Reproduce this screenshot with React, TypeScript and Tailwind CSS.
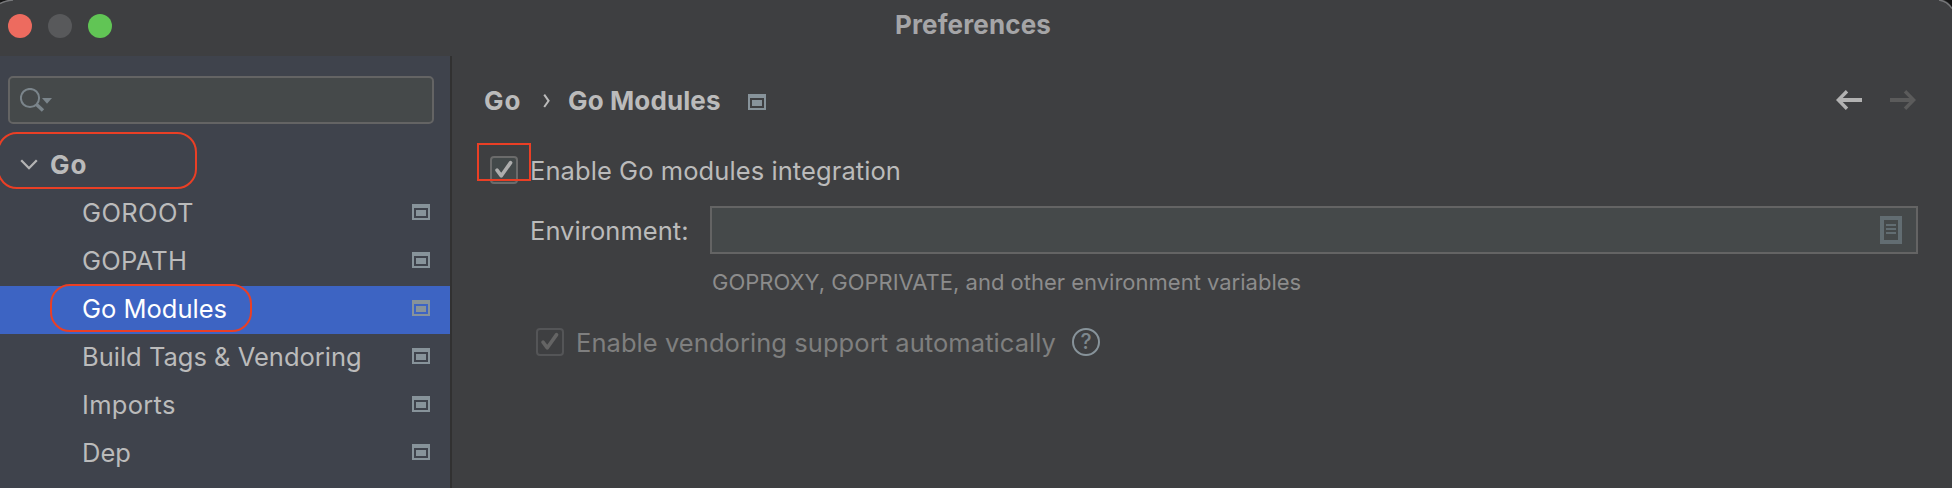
function ProjectIcon({ className = '' }: { className?: string }) {
  return (
    <svg className={`block shrink-0 ${className}`} width="18" height="16" viewBox="0 0 18 16" fill="#87939a" shapeRendering="crispEdges">
      <path fillRule="evenodd" d="M0 0H18V16H0ZM2 4V14H16V4Z" />
      <rect x="4" y="6" width="10" height="6" />
    </svg>
  );
}

function CheckBox({ disabled = false }: { disabled?: boolean }) {
  return (
    <span
      className={`block h-7 w-7 shrink-0 rounded-[4px] border-2 ${
        disabled ? 'border-[#545557] bg-[#3e3f41]' : 'border-[#6b6b6b] bg-[#43494a]'
      }`}
    >
      <svg className="-mt-0.5 -ml-0.5 block" width="28" height="28" viewBox="0 0 28 28" fill="none">
        <path d="M7 14.2L11.3 19.8L20.6 6.6" stroke={disabled ? '#646464' : '#adadad'} strokeWidth="3.6" strokeLinecap="round" strokeLinejoin="round" />
      </svg>
    </span>
  );
}

function Arrow({ color, flip = false }: { color: string; flip?: boolean }) {
  return (
    <svg className={flip ? 'block -scale-x-100' : 'block'} width="26" height="20" viewBox="0 0 26 20" fill="none" stroke={color}>
      <path d="M4 10H26" strokeWidth="4" />
      <path d="M11 1.2L2.3 10L11 18.8" strokeWidth="3.4" />
    </svg>
  );
}

function TreeRow({ label, selected = false, tracking = '' }: { label: string; selected?: boolean; tracking?: string }) {
  return (
    <div className={`flex h-12 items-start justify-between pr-5 pl-[82px] ${selected ? 'bg-[#3d64c3] text-white' : ''}`}>
      <span className={`leading-[46px] ${tracking}`}>{label}</span>
      <ProjectIcon className="mt-3.5" />
    </div>
  );
}

export default function App() {
  return (
    <div className="relative flex h-[488px] w-[1952px] flex-col overflow-hidden bg-[#3e3f41] font-['Inter','Liberation_Sans',sans-serif] text-[25.5px] whitespace-nowrap text-[#bbbbbb]">
      <header className="grid h-14 shrink-0 grid-cols-[1fr_auto_1fr] items-start">
        <div className="flex gap-4 pt-3.5 pl-2">
          <span className="h-6 w-6 rounded-full bg-[#ed6b5f]" />
          <span className="h-6 w-6 rounded-full bg-[#58595b]" />
          <span className="h-6 w-6 rounded-full bg-[#61c555]" />
        </div>
        <h1 className="pr-[6px] text-[26px] leading-[49px] font-bold tracking-[0.15px] text-[#a5a5a7]">Preferences</h1>
      </header>

      <div className="flex min-h-0 flex-1">
        <aside className="w-[452px] shrink-0 border-r-2 border-[#313131] bg-[#3f434c]">
          <div className="pt-5 pr-4 pb-[18px] pl-2">
            <div className="flex h-12 items-start rounded-[5px] border-2 border-[#646464] bg-[#45494a]">
              <svg className="mt-2.5 ml-2.5 block" width="34" height="26" viewBox="0 0 34 26" fill="none">
                <circle cx="10" cy="10" r="9.1" stroke="#7b858b" strokeWidth="2" />
                <path d="M16.5 16.5L23 22.6" stroke="#7b858b" strokeWidth="3.4" />
                <path d="M22 10H32L27 15.8Z" fill="#7b858b" />
              </svg>
            </div>
          </div>
          <div className="flex h-12 items-start pl-5">
            <svg className="mt-[17px] block" width="18" height="12" viewBox="0 0 18 12" fill="none">
              <path d="M1.2 1.2L9 9.2L16.8 1.2" stroke="#b4b4b4" strokeWidth="2.3" />
            </svg>
            <span className="pl-3 text-[26px] leading-[45px] font-bold tracking-[0.9px]">Go</span>
          </div>
          <TreeRow label="GOROOT" tracking="tracking-[0.37px]" />
          <TreeRow label="GOPATH" tracking="tracking-[0.24px]" />
          <TreeRow label="Go Modules" selected />
          <TreeRow label="Build Tags & Vendoring" />
          <TreeRow label="Imports" tracking="tracking-[0.3px]" />
          <TreeRow label="Dep" />
        </aside>

        <main className="flex flex-1 flex-col pr-[34px]">
          <div className="flex h-[86px] items-start pt-[21px] pr-0.5 pl-8">
            <nav className="flex items-start text-[26px] leading-[47px] font-bold tracking-[0.12px]">
              <span className="w-[59px] tracking-[0.9px]">Go</span>
              <svg className="mt-[17px] block" width="8" height="14" viewBox="0 0 8 14" fill="none">
                <path d="M1.2 0.6L5.6 6.8L1.2 13" stroke="#bbbbbb" strokeWidth="2" />
              </svg>
              <span className="w-[197px] pl-[17px]">Go Modules</span>
              <ProjectIcon className="mt-[17px]" />
            </nav>
            <div className="ml-auto flex gap-7 pt-[13px]">
              <Arrow color="#b2b2b2" />
              <Arrow color="#5b5b5b" flip />
            </div>
          </div>

          <label className="flex h-16 items-start pl-[38px]">
            <span className="mt-3.5">
              <CheckBox />
            </span>
            <span className="pl-3 leading-[57px] tracking-[0.08px]">Enable Go modules integration</span>
          </label>

          <div className="flex h-12 items-start pl-[78px]">
            <span className="w-[180px] leading-[49px] tracking-[0.05px]">Environment:</span>
            <div className="flex h-12 flex-1 items-start justify-end border-2 border-[#646464] bg-[#45494a] pt-2 pr-3.5">
              <svg className="block" width="22" height="28" viewBox="0 0 22 28" fill="#626d72" shapeRendering="crispEdges">
                <path fillRule="evenodd" d="M0 0H22V28H0ZM4 4V24H18V4Z" />
                <rect x="6" y="8" width="10" height="2" />
                <rect x="6" y="12" width="10" height="2" />
                <rect x="6" y="16" width="10" height="2" />
              </svg>
            </div>
          </div>
          <p className="h-[74px] pl-[260px] text-[22px] leading-[56px] text-[#8c8c8c]">GOPROXY, GOPRIVATE, and other environment variables</p>

          <div className="flex items-start pl-[84px]">
            <CheckBox disabled />
            <span className="w-[508px] pl-3 leading-[29px] tracking-[0.06px] text-[#7f7f7f]">Enable vendoring support automatically</span>
            <span className="flex h-7 w-7 items-center justify-center rounded-full border-2 border-[#87939a] text-[21px] leading-6 font-medium text-[#7d878d]">
              ?
            </span>
          </div>
        </main>
      </div>

      <span className="absolute top-[132px] -left-[3px] h-[57px] w-[200px] rounded-[20px] border-2 border-[#ea3f25]" />
      <span className="absolute top-[284px] left-[50px] h-12 w-[202px] rounded-[20px] border-2 border-[#ea3f25]" />
      <span className="absolute top-[143px] left-[477px] h-[38px] w-[54px] border-2 border-[#ea3f25]" />

      <svg className="absolute top-0 left-0" width="16" height="10" viewBox="0 0 16 10" fill="none">
        <path d="M0 0H8Q3 1 0 3Z" fill="#151515" />
        <path d="M0 3.6Q5 0.6 13 0" stroke="#77787a" strokeWidth="1.3" />
      </svg>
      <svg className="absolute top-0 right-0" width="16" height="12" viewBox="0 0 16 12" fill="none">
        <path d="M16 0H8Q13 2 16 7Z" fill="#151515" />
        <path d="M3 0Q11 1 16 8.6" stroke="#77787a" strokeWidth="1.3" />
      </svg>
    </div>
  );
}
